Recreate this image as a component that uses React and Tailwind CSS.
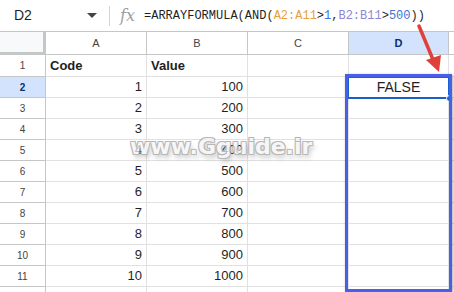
import React from 'react'

const rows = [
  { n: 1, a: 'Code', b: 'Value', head: true },
  { n: 2, a: '1', b: '100' },
  { n: 3, a: '2', b: '200' },
  { n: 4, a: '3', b: '300' },
  { n: 5, a: '4', b: '400' },
  { n: 6, a: '5', b: '500' },
  { n: 7, a: '6', b: '600' },
  { n: 8, a: '7', b: '700' },
  { n: 9, a: '8', b: '800' },
  { n: 10, a: '9', b: '900' },
  { n: 11, a: '10', b: '1000' },
  { n: 12, a: '', b: '' },
]

const cols = ['A', 'B', 'C', 'D']

const App = () => {
  return (
    <div className='relative w-[454px] h-[292px] overflow-hidden bg-white font-["Liberation_Sans",Arial,sans-serif] text-[#1f1f1f]'>
      {/* formula bar */}
      <div className='flex items-center h-[32px] border-b border-[#c4c7c5]'>
        <div className='w-[80px] pl-[14px] text-[14px]'>D2</div>
        <svg width="10" height="6" viewBox="0 0 10 6" className='ml-[7px]'><path d="M0 0h10L5 5z" fill="#444" /></svg>
        <div className='ml-[12px] w-px h-[20px] bg-[#d5d5d5]'></div>
        <div className='ml-[10px] w-[22px] text-[16px] italic text-[#9e9e9e] font-["DejaVu_Serif",serif] leading-none'>fx</div>
        <div className='ml-[2px] text-[12px] font-["Liberation_Mono",monospace] whitespace-nowrap'>
          =ARRAYFORMULA(AND(<span className='text-[#e9a03b]'>A2:A11</span>&gt;<span className='text-[#3b73d8]'>1</span>,<span className='text-[#8f86d2]'>B2:B11</span>&gt;<span className='text-[#3b73d8]'>500</span>))
        </div>
      </div>

      {/* grid */}
      <div className='grid grid-cols-[46px_101px_101px_101px_100px_1fr] grid-rows-[23px_22px_repeat(11,21px)] text-[13px]'>
        <div className='bg-[#f8f9fa] border-r-[3px] border-b-[3px] border-[#c4c7c5]'></div>
        {cols.map((c) => (
          <div key={c} className={`flex items-center justify-center text-[11px] border-r border-b border-[#c4c7c5] ${c === 'D' ? 'bg-[#d3e3fd] font-bold text-[#0b2f6b]' : 'bg-white text-[#444]'}`}>{c}</div>
        ))}
        <div className='border-b border-[#c4c7c5]'></div>

        {rows.map((r) => (
          <React.Fragment key={r.n}>
            <div className={`flex items-center justify-center text-[10px] border-r border-b border-[#c4c7c5] ${r.n === 2 ? 'bg-[#d3e3fd] font-bold text-[#0b2f6b]' : 'text-[#444]'}`}>{r.n < 12 ? r.n : ''}</div>
            <div className={`flex items-center px-[4px] border-r border-b border-[#e1e1e1] ${r.head ? 'font-bold justify-start' : 'justify-end'}`}>{r.a}</div>
            <div className={`flex items-center px-[4px] border-r border-b border-[#e1e1e1] ${r.head ? 'font-bold justify-start' : 'justify-end'}`}>{r.b}</div>
            <div className='border-r border-b border-[#e1e1e1]'></div>
            <div className='flex items-center justify-center border-r border-b border-[#e1e1e1] text-[14px]'>{r.n === 2 ? 'FALSE' : ''}</div>
            <div className='border-b border-[#e1e1e1]'></div>
          </React.Fragment>
        ))}
      </div>

      {/* active cell D2 */}
      <div className='absolute left-[347px] top-[76px] w-[103px] h-[23px] border-2 border-[#1a5fd0]'></div>
      <div className='absolute left-[446px] top-[95px] w-[7px] h-[7px] rounded-full bg-[#1a5fd0] border border-white'></div>

      {/* highlight box */}
      <div className='absolute left-[345px] top-[74px] w-[107px] h-[218px] border-[3px] border-[#4a5ee6] shadow-[1px_1px_3px_rgba(0,0,0,0.35)]'></div>

      {/* arrow */}
      <svg className='absolute left-[410px] top-[24px]' width="40" height="54" viewBox="0 0 40 54">
        <line x1="9" y1="2" x2="24" y2="38" stroke="#e0403a" strokeWidth="3.5" strokeLinecap="round" />
        <path d="M16 36 L29 48 L31 31 Z" fill="#e0403a" />
      </svg>

      {/* watermark */}
      <div className='absolute left-[130px] top-[134px] text-[22px] leading-[26px] font-bold text-[#f4f4f4] opacity-75 font-["DejaVu_Sans",sans-serif] [text-shadow:-1px_-1px_0_#a0a0a0,1px_-1px_0_#a0a0a0,-1px_1px_0_#a0a0a0,1px_1px_0_#a0a0a0,2px_4px_5px_rgba(0,0,0,0.3)] select-none'>www.Gguide.ir</div>
    </div>
  )
}

export default App
